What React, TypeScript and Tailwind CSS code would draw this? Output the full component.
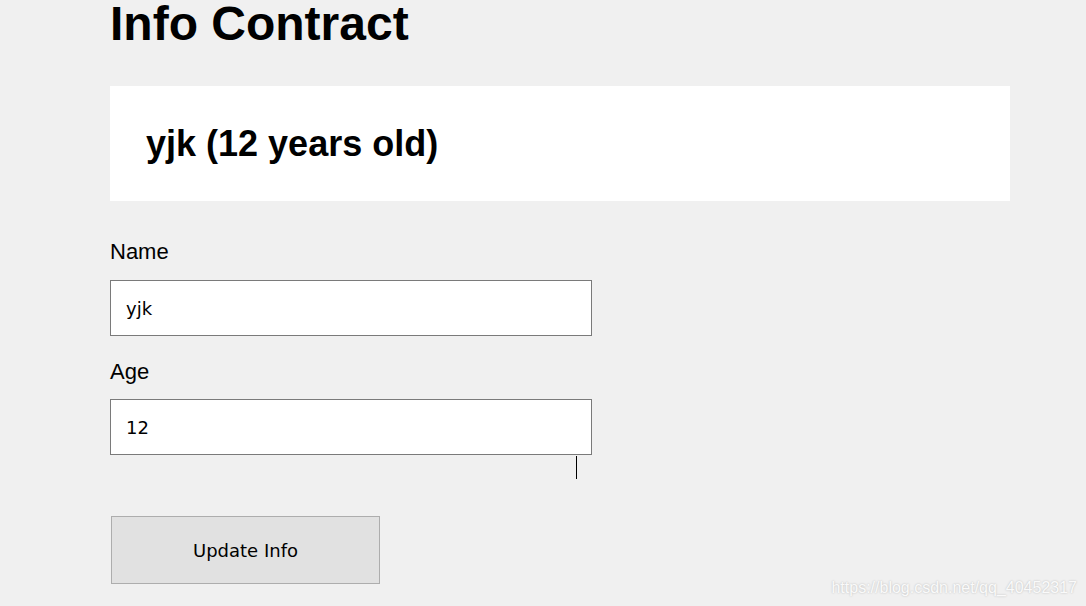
import React, { useState } from 'react';

const App: React.FC = () => {
  const [name, setName] = useState('yjk');
  const [age, setAge] = useState('12');

  return (
    <div className="relative min-h-[606px] w-full bg-[#f0f0f0] font-['Liberation_Sans',Arial,sans-serif] text-black overflow-hidden">
      <div className="ml-[110px] w-[900px]">
        <h1 className="text-[48px] font-bold leading-none">Info Contract</h1>

        <div className="mt-[38px] flex h-[115px] items-center bg-white px-[36px]">
          <h2 className="text-[36px] font-bold leading-none">
            {name} ({age} years old)
          </h2>
        </div>

        <form className="mt-[38px]" onSubmit={(e) => e.preventDefault()}>
          <label htmlFor="name" className="block text-[22px] leading-[26px]">
            Name
          </label>
          <input
            id="name"
            type="text"
            value={name}
            onChange={(e) => setName(e.target.value)}
            className="mt-[15px] block h-[56px] w-[482px] border border-[#7a7a7a] bg-white px-[15px] font-['DejaVu_Sans',Tahoma,sans-serif] text-[18px] outline-none"
          />

          <label htmlFor="age" className="mt-[23px] block text-[22px] leading-[26px]">
            Age
          </label>
          <div className="relative mt-[14px]">
            <input
              id="age"
              type="text"
              value={age}
              onChange={(e) => setAge(e.target.value)}
              className="block h-[56px] w-[482px] border border-[#7a7a7a] bg-white px-[15px] font-['DejaVu_Sans',Tahoma,sans-serif] text-[18px] outline-none"
            />
            <span className="absolute left-[466px] top-[57px] h-[23px] w-px bg-black" />
          </div>

          <button
            type="submit"
            className="ml-px mt-[61px] block h-[68px] w-[269px] border border-[#adadad] bg-[#e1e1e1] font-['DejaVu_Sans',Tahoma,sans-serif] text-[18px]"
          >
            Update Info
          </button>
        </form>
      </div>

      <span className="absolute right-[9px] top-[576px] text-[16px] text-[#fafafa] [text-shadow:0_0_2px_#b4b4b4]">
        https://blog.csdn.net/qq_40452317
      </span>
    </div>
  );
};

export default App;
